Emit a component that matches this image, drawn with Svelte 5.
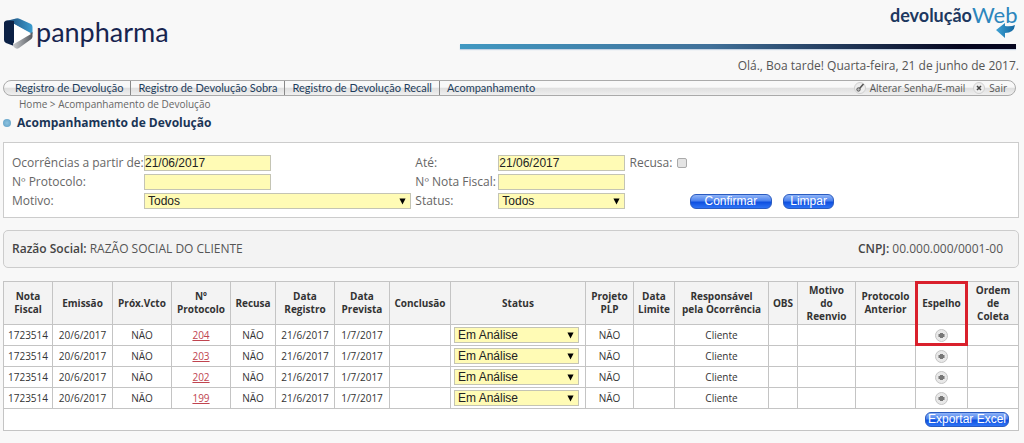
<script>
  const menu = [
    'Registro de Devolução',
    'Registro de Devolução Sobra',
    'Registro de Devolução Recall',
    'Acompanhamento'
  ];

  const columns = [
    { title: 'Nota\nFiscal', size: 49 },
    { title: 'Emissão', size: 60 },
    { title: 'Próx.Vcto', size: 59 },
    { title: 'Nº\nProtocolo', size: 59 },
    { title: 'Recusa', size: 45 },
    { title: 'Data\nRegistro', size: 59 },
    { title: 'Data\nPrevista', size: 55 },
    { title: 'Conclusão', size: 61 },
    { title: 'Status', size: 135 },
    { title: 'Projeto\nPLP', size: 48 },
    { title: 'Data\nLimite', size: 41 },
    { title: 'Responsável\npela Ocorrência', size: 94 },
    { title: 'OBS', size: 29 },
    { title: 'Motivo\ndo\nReenvio', size: 58 },
    { title: 'Protocolo\nAnterior', size: 60 },
    { title: 'Espelho', size: 52, marked: true },
    { title: 'Ordem\nde\nColeta', size: 51 }
  ];
  const total = columns.reduce((sum, c) => sum + c.size, 0);

  const protocols = [204, 203, 202, 199];

  let from = $state('21/06/2017');
  let until = $state('21/06/2017');
  let protocol = $state('');
  let invoice = $state('');
  let refused = $state(false);

  function clearForm() {
    from = '';
    until = '';
    protocol = '';
    invoice = '';
    refused = false;
  }
</script>

{#snippet arrow()}
  <svg class="arrow" viewBox="0 0 8 8" aria-hidden="true"><path d="M0.5 0.5h7L4 7.5z" /></svg>
{/snippet}

<div class="page">
  <header>
    <svg class="logo" viewBox="0 0 180 56" role="img" aria-label="panpharma">
      <defs>
        <linearGradient id="top" x1="0" x2="1"><stop offset="0" stop-color="#1b4674" /><stop offset="1" stop-color="#3d9dd0" /></linearGradient>
        <linearGradient id="base" x1="0" x2="1"><stop offset="0" stop-color="#c9cbce" /><stop offset="1" stop-color="#55595f" /></linearGradient>
      </defs>
      <path fill="url(#top)" d="M3 21 13 18.500Q15 18 17 19L28 24Q29.500 25 29.500 27V34L11 24z" />
      <path fill="#0c2145" d="M1 23Q1 21 4 20.500L11 21V46L3 43Q1 42 1 40z" />
      <path fill="url(#base)" d="M10 43 29.500 32V37Q29 39 27 40L16 48Q13 50 10 46z" />
      <path fill="#fff" d="M11 24 28 34 11 44z" />
      <text x="33" y="42" class="brand">panpharma</text>
    </svg>
    <div class="banner">
      <svg class="product" viewBox="0 0 130 44" role="img" aria-label="devoluçãoWeb">
        <defs>
          <linearGradient id="tip" x1="0" x2="1"><stop offset="0" stop-color="#3fa2d4" /><stop offset="1" stop-color="#12659f" /></linearGradient>
        </defs>
        <text x="4" y="22" class="devolucao">devolução</text>
        <text x="86" y="23" class="web">Web</text>
        <path fill="url(#tip)" d="M110 30 119 23V26Q125 27 129 25Q128 33 119 33V38z" />
      </svg>
      <div class="line"></div>
    </div>
  </header>
  <p class="hello">Olá., Boa tarde! Quarta-feira, 21 de junho de 2017.</p>

  <nav>
    <ul class="menu">
      {#each menu as item}
        <li><a href="#menu">{item}</a></li>
      {/each}
    </ul>
    <div class="account">
      <a href="#senha">
        <svg viewBox="0 0 12 12" aria-hidden="true">
          <circle cx="6" cy="6" r="5.5" fill="#eee" stroke="#d0d0d0" />
          <path d="M5.5 6.5 9.5 2" stroke="#555" stroke-width="1.6" /><circle cx="4.5" cy="7.5" r="1.7" fill="#bbb" stroke="#555" />
        </svg>
        Alterar Senha/E-mail
      </a>
      <a href="#sair">
        <svg viewBox="0 0 12 12" aria-hidden="true">
          <circle cx="6" cy="6" r="5.5" fill="#eee" stroke="#d0d0d0" />
          <path d="M4 4l4 4M8 4l-4 4" stroke="#444" stroke-width="1.5" />
        </svg>
        Sair
      </a>
    </div>
  </nav>

  <p class="crumbs"><a href="#home">Home</a> &gt; Acompanhamento de Devolução</p>
  <h1><span class="dot"></span>Acompanhamento de Devolução</h1>

  <form class="filters" onsubmit={(e) => e.preventDefault()}>
    <label for="from">Ocorrências a partir de:</label>
    <div><input id="from" type="text" bind:value={from}></div>
    <label for="until">Até:</label>
    <div><input id="until" type="text" bind:value={until}></div>
    <div class="refused">
      <label for="refused">Recusa:</label>
      <input id="refused" type="checkbox" bind:checked={refused}>
    </div>

    <label for="protocol">Nº Protocolo:</label>
    <div><input id="protocol" type="text" bind:value={protocol}></div>
    <label for="invoice">Nº Nota Fiscal:</label>
    <div><input id="invoice" type="text" bind:value={invoice}></div>
    <div></div>

    <label for="reason">Motivo:</label>
    <div class="select wide">
      <select id="reason"><option>Todos</option></select>
      {@render arrow()}
    </div>
    <label for="status">Status:</label>
    <div class="select short">
      <select id="status"><option>Todos</option></select>
      {@render arrow()}
    </div>
    <div class="actions">
      <button class="confirm">Confirmar</button>
      <button type="button" onclick={clearForm}>Limpar</button>
    </div>
  </form>

  <section class="client">
    <span><b>Razão Social:</b> RAZÃO SOCIAL DO CLIENTE</span>
    <span><b>CNPJ:</b> 00.000.000/0001-00</span>
  </section>

  <table>
    <colgroup>
      {#each columns as column}
        <col style="width: {(column.size / total) * 100}%">
      {/each}
    </colgroup>
    <thead>
      <tr>
        {#each columns as column}
          <th class:marked={column.marked}>{column.title}</th>
        {/each}
      </tr>
    </thead>
    <tbody>
      {#each protocols as number}
        <tr>
          <td>1723514</td>
          <td>20/6/2017</td>
          <td>NÃO</td>
          <td><a href="#p{number}">{number}</a></td>
          <td>NÃO</td>
          <td>21/6/2017</td>
          <td>1/7/2017</td>
          <td></td>
          <td>
            <div class="select">
              <select aria-label="Status {number}"><option>Em Análise</option></select>
              {@render arrow()}
            </div>
          </td>
          <td>NÃO</td>
          <td></td>
          <td>Cliente</td>
          <td></td>
          <td></td>
          <td></td>
          <td>
            <button class="mirror" aria-label="Espelho {number}">
              <svg viewBox="0 0 13 13" aria-hidden="true">
                <circle cx="6.5" cy="6.5" r="6" fill="#e8e8e8" stroke="#c4c4c4" />
                <path fill="#777" d="M5 4h3v1h1.500v3H8v1H5V8H3.500V5H5z" />
              </svg>
            </button>
          </td>
          <td></td>
        </tr>
      {/each}
    </tbody>
    <tfoot>
      <tr>
        <td colspan={columns.length}><button class="export">Exportar Excel</button></td>
      </tr>
    </tfoot>
  </table>
</div>

<style>
  :global(body) {
    background: #f8f8f8;
  }
  .page {
    padding: 0 5px 12px 3px;
    font-family: "Open Sans", "Noto Sans", sans-serif;
    font-size: 12px;
    line-height: 16px;
    color: #555;
  }
  a {
    color: inherit;
    text-decoration: none;
  }
  header {
    display: flex;
    justify-content: space-between;
    height: 56px;
  }
  .logo {
    width: 180px;
    height: 56px;
  }
  .brand {
    font: 27px Lato, sans-serif;
    fill: #17244f;
  }
  .banner {
    display: flex;
    box-sizing: border-box;
    flex-direction: column;
    align-items: flex-end;
    width: 55%;
    padding-right: 3px;
  }
  .product {
    width: 130px;
    height: 44px;
    overflow: visible;
  }
  .devolucao {
    font: bold 18px Lato, sans-serif;
    fill: #1d3860;
  }
  .web {
    font: 22px Lato, sans-serif;
    fill: #2c86bd;
  }
  .line {
    width: 100%;
    height: 5px;
    background: linear-gradient(to right, #4199c2, #41719a 45%, #06061f 90%);
    box-shadow: 0 1px 1px #c5d3e4;
  }
  p, h1 {
    margin: 0;
  }
  .hello {
    padding: 2px 0 6px;
    text-align: right;
  }
  nav {
    display: flex;
    justify-content: space-between;
    margin-right: 3px;
    border: 1px solid #aaa;
    border-radius: 8px;
    background: linear-gradient(#f8f8f8 45%, #dedede 50%, #f0f0f0);
    line-height: 14px;
  }
  .menu {
    display: flex;
    margin: 0;
    padding: 0 0 0 4px;
    list-style: none;
    font-family: Lato, sans-serif;
    font-size: 11px;
    color: #1d3d5c;
  }
  .menu li {
    padding: 0 7px;
  }
  .menu li + li {
    border-left: 1px solid #888;
  }
  .account {
    display: flex;
    gap: 8px;
    padding-right: 8px;
    font-size: 10px;
  }
  .account a {
    display: flex;
    align-items: center;
    gap: 4px;
  }
  .account svg {
    width: 12px;
    height: 12px;
  }
  .crumbs {
    padding-left: 16px;
    font-size: 10px;
    color: #666;
  }
  h1 {
    display: flex;
    align-items: center;
    gap: 6px;
    padding: 3px 0 11px;
    font-size: 12px;
    line-height: 16px;
    color: #1a3556;
  }
  .dot {
    width: 8px;
    height: 8px;
    border-radius: 50%;
    background: radial-gradient(#8dc3e0, #5d9dc4);
  }
  .filters {
    display: grid;
    grid-template-columns: 132px 271fr 83px 131fr 377fr;
    row-gap: 3px;
    padding: 12px 11px 8px 8px;
    border: 1px solid #ccc;
    background: #fff;
    color: #666;
  }
  .filters > div {
    display: flex;
    align-items: center;
  }
  input[type="text"], select {
    box-sizing: border-box;
    width: 127px;
    height: 16px;
    padding: 0;
    border: 1px solid #c4c4b4;
    border-radius: 0;
    background: #fffbb5;
    font: 12px "Liberation Sans", sans-serif;
    color: #222;
  }
  .select {
    position: relative;
  }
  select {
    display: block;
    width: 100%;
    padding: 0 3px;
    line-height: 14px;
    appearance: none;
  }
  .filters .wide {
    margin-right: 4px;
  }
  .short {
    width: 127px;
  }
  .arrow {
    position: absolute;
    top: 5px;
    right: 5px;
    width: 7px;
    height: 7px;
    pointer-events: none;
  }
  .refused {
    gap: 5px;
  }
  input[type="checkbox"] {
    appearance: none;
    box-sizing: border-box;
    width: 10px;
    height: 10px;
    margin: 0;
    border: 1px solid #aaa;
    border-radius: 2px;
    background: #e4e4e4;
  }
  input[type="checkbox"]:checked {
    background: #1f62e6;
  }
  .actions {
    gap: 11px;
    padding-left: 60px;
  }
  button {
    height: 15px;
    padding: 0 9px;
    border: 1px solid #2a5bc0;
    border-radius: 6px;
    background: linear-gradient(#8fb4f7, #4c82ee 45%, #0e4fe0 55%, #2f74f5);
    font: 12px/13px "Liberation Sans", sans-serif;
    color: #fff;
  }
  .actions button {
    padding: 0 6px;
  }
  .actions .confirm {
    padding: 0 14px;
  }
  .client {
    display: flex;
    justify-content: space-between;
    margin: 12px 0 13px;
    padding: 10px 15px 10px 8px;
    border: 1px solid #ccc;
    border-radius: 5px;
    background: #f3f3f3;
  }
  b {
    font-weight: 600;
    color: #444;
  }
  table {
    width: 100%;
    border-collapse: collapse;
    table-layout: fixed;
    background: #fff;
    font-size: 10px;
    line-height: 13px;
    color: #333;
    text-align: center;
  }
  th, td {
    height: 20px;
    padding: 0;
    border: 1px solid #c4c4c4;
  }
  th {
    height: 42px;
    background: #f3f3f3;
    white-space: pre-line;
  }
  td a {
    color: #c0444f;
    text-decoration: underline;
  }
  td .select {
    margin: 0 6px 0 3px;
  }
  /* outline spans the heading and the first row */
  .marked {
    position: relative;
  }
  .marked::after {
    content: "";
    position: absolute;
    inset: -1px -1px -22px -1px;
    border: 3px solid #d9202c;
  }
  .mirror {
    display: block;
    width: 13px;
    height: 13px;
    margin: 0 auto;
    padding: 0;
    border: 0;
    background: none;
  }
  .mirror svg {
    display: block;
  }
  tfoot td {
    height: 21px;
    padding-right: 9px;
    text-align: right;
  }
  .export {
    display: block;
    margin-left: auto;
    padding: 0 2px;
  }
</style>
